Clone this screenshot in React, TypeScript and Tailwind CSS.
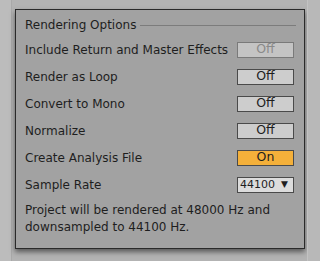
import React from "react";

function Toggle({ label, state }: { label: string; state: "off" | "on" | "disabled" }) {
  const cls =
    state === "on"
      ? "bg-[#f4b03a] border-[#4a4a4a] text-[#1e1e1e]"
      : state === "disabled"
      ? "bg-[#c4c4c4] border-[#7a7a7a] text-[#8a8a8a]"
      : "bg-[#cdcdcd] border-[#4a4a4a] text-[#1e1e1e]";
  return (
    <div className={`w-[57px] h-[16px] border flex items-center justify-center text-[12.5px] leading-none ${cls}`}>
      {label}
    </div>
  );
}

function Row({ label, children }: { label: string; children: React.ReactNode }) {
  return (
    <div className="h-[27px] flex items-center justify-between">
      <span>{label}</span>
      {children}
    </div>
  );
}

export default function App() {
  return (
    <div
      className="w-[320px] h-[261px] bg-[#b3b3b3] relative overflow-hidden flex text-[#1e1e1e]"
      style={{ fontFamily: '"DejaVu Sans", Verdana, sans-serif' }}
    >
      <div className="w-[12px] h-full bg-[#bcbcbc] border-r border-[#a9a9a9]" />
      <div className="ml-[3px] mt-[9px] w-[290px] h-[240px] bg-[#a2a2a2] border border-[#2a2a2a] shadow-[0_3px_5px_rgba(0,0,0,0.5)] pl-[9px] pr-[10px] pt-[6px] text-[12px] flex flex-col">
        <div className="h-[18px] flex items-center gap-[4px]">
          <span>Rendering Options</span>
          <div className="flex-1 h-px bg-[#7c7c7c] mr-[-2px]" />
        </div>
        <div className="mt-[2px] flex flex-col">
          <Row label="Include Return and Master Effects">
            <Toggle label="Off" state="disabled" />
          </Row>
          <Row label="Render as Loop">
            <Toggle label="Off" state="off" />
          </Row>
          <Row label="Convert to Mono">
            <Toggle label="Off" state="off" />
          </Row>
          <Row label="Normalize">
            <Toggle label="Off" state="off" />
          </Row>
          <Row label="Create Analysis File">
            <Toggle label="On" state="on" />
          </Row>
          <Row label="Sample Rate">
            <div className="w-[57px] h-[16px] border border-[#4a4a4a] bg-[#dcdcdc] flex items-center justify-between pl-[2px] pr-[5px] text-[11px] leading-none">
              <span>44100</span>
              <span className="text-[9px]">▼</span>
            </div>
          </Row>
        </div>
        <div className="mt-[4px] leading-[17px]">
          Project will be rendered at 48000 Hz and
          <br />
          downsampled to 44100 Hz.
        </div>
      </div>
      <div className="absolute right-0 top-0 w-[13px] h-full bg-[#b8b8b8] border-l border-[#c2c2c2]" />
    </div>
  );
}
